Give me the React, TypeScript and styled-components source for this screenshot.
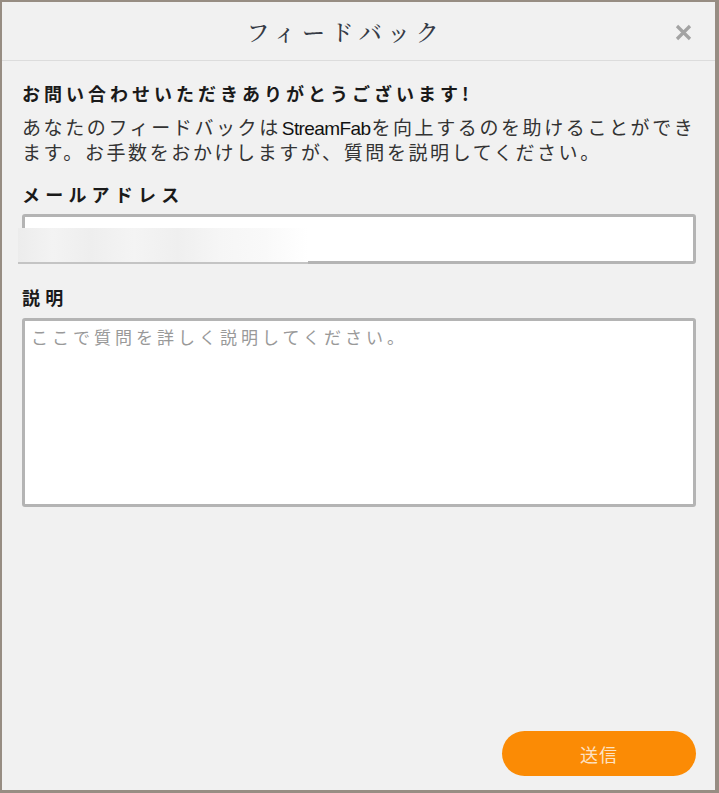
import React from "react";
import styled, { createGlobalStyle } from "styled-components";

const Global = createGlobalStyle`
  html, body { margin: 0; padding: 0; background: #f1f1f1; }
  *, *::before, *::after { box-sizing: border-box; }
  #root { height: 100vh; }
`;

const JP = `"Noto Sans CJK JP", "Noto Sans", "Liberation Sans", sans-serif`;

const Window = styled.div`
  height: 100vh;
  display: flex;
  flex-direction: column;
  background: #f1f1f1;
  border-style: solid;
  border-color: #978d83;
  border-width: 2px 4px 3px 2px;
  font-family: ${JP};
`;

const Header = styled.header`
  position: relative;
  height: 59px;
  flex: none;
  display: flex;
  align-items: center;
  justify-content: center;
  padding-right: 26px;
  border-bottom: 1px solid #dcdcdc;
`;

const Title = styled.h1`
  margin: 0;
  font-family: "Noto Serif CJK JP", "Liberation Serif", ${JP};
  font-weight: 500;
  font-size: 23px;
  letter-spacing: 5.6px;
  color: #363b46;
`;

const Close = styled.button`
  position: absolute;
  right: 22px;
  top: 20px;
  width: 20px;
  height: 20px;
  padding: 0;
  border: 0;
  background: none;
  display: flex;
  align-items: center;
  justify-content: center;
`;

const Body = styled.main`
  flex: 1;
  display: flex;
  flex-direction: column;
  padding: 21px 19px 14px 20px;
`;

const Heading = styled.h2`
  margin: 0;
  font-size: 18px;
  line-height: 22px;
  font-weight: 700;
  letter-spacing: 4px;
  color: #1a1a1a;
`;

const Intro = styled.p`
  margin: 11px 0 0;
  font-size: 19px;
  line-height: 23px;
  letter-spacing: 2.6px;
  color: #333;
`;

const Brand = styled.span`
  font-family: "Liberation Sans", sans-serif;
  letter-spacing: -0.6px;
  margin: 0 1px;
  font-size: 19px;
  color: #111;
`;

const Label = styled.label<{ $top: number }>`
  display: block;
  margin-top: ${(p) => p.$top}px;
  font-size: 18px;
  line-height: 22px;
  font-weight: 700;
  letter-spacing: 5.2px;
  color: #1a1a1a;
`;

const Field = styled.div`
  position: relative;
  margin-top: 9px;
`;

const Input = styled.input`
  display: block;
  width: 100%;
  height: 50px;
  border: 3px solid #b4b4b4;
  border-radius: 3px;
  background: #fff;
  outline: none;
`;

const Redacted = styled.div`
  position: absolute;
  left: -4px;
  top: 14px;
  width: 290px;
  height: 36px;
  background: linear-gradient(
    90deg,
    #ececec 0%,
    #f3f3f3 12%,
    #eeeeee 25%,
    #f4f4f4 40%,
    #efefef 55%,
    #f6f6f6 70%,
    #f9f9f9 85%,
    #ffffff 100%
  );
  border-bottom: 2px solid #c4c4c4;
`;

const TextArea = styled.textarea`
  display: block;
  width: 100%;
  height: 189px;
  margin-top: 10px;
  border: 3px solid #b4b4b4;
  border-radius: 3px;
  background: #fff;
  resize: none;
  outline: none;
  padding: 4px 6px;
  font-family: ${JP};
  font-size: 17px;
  line-height: 24px;
  letter-spacing: 4px;
  color: #333;
  &::placeholder { color: #999; }
`;

const Footer = styled.div`
  margin-top: auto;
  display: flex;
  justify-content: flex-end;
`;

const Submit = styled.button`
  width: 194px;
  height: 45px;
  border: 0;
  border-radius: 23px;
  background: #fb8b05;
  color: #fde2c4;
  font-family: ${JP};
  font-size: 18px;
  letter-spacing: 1px;
  cursor: pointer;
`;

export default function App() {
  return (
    <>
      <Global />
      <Window>
        <Header>
          <Title>フィードバック</Title>
          <Close aria-label="close">
            <svg width="17" height="17" viewBox="0 0 17 17">
              <path d="M2 2 L15 15 M15 2 L2 15" stroke="#a3a3a3" strokeWidth="3.2" strokeLinecap="butt" />
            </svg>
          </Close>
        </Header>
        <Body>
          <Heading>お問い合わせいただきありがとうございます!</Heading>
          <Intro>
            あなたのフィードバックは<Brand>StreamFab</Brand>を向上するのを助けることができます。お手数をおかけしますが、質問を説明してください。
          </Intro>
          <Label $top={20}>メールアドレス</Label>
          <Field>
            <Input type="email" />
            <Redacted />
          </Field>
          <Label $top={22}>説明</Label>
          <TextArea placeholder="ここで質問を詳しく説明してください。" />
          <Footer>
            <Submit>送信</Submit>
          </Footer>
        </Body>
      </Window>
    </>
  );
}
